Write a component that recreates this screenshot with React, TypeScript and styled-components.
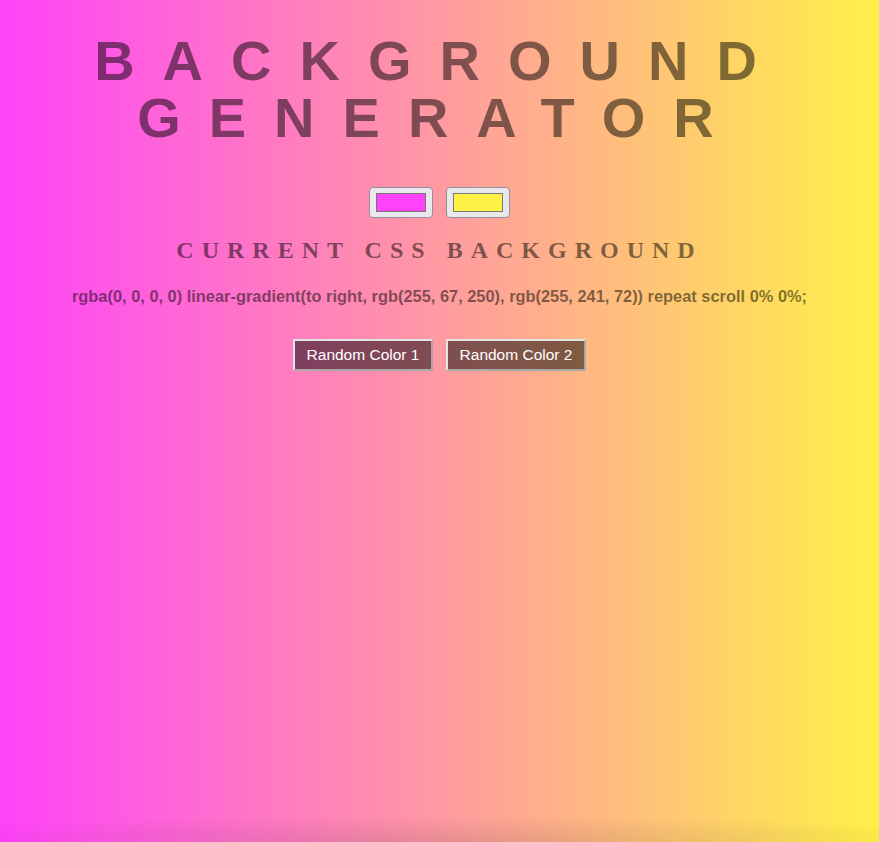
import React, { useState } from 'react';
import styled, { createGlobalStyle } from 'styled-components';

const GlobalStyle = createGlobalStyle`
    html, body {
        margin: 0;
        padding: 0;
    }
    #root {
        min-height: 100vh;
    }
`;

const Page = styled.div<{ $from: string; $to: string }>`
    min-height: 100vh;
    display: flex;
    flex-direction: column;
    align-items: center;
    text-align: center;
    color: rgba(0, 0, 0, 0.5);
    background: linear-gradient(to right, ${p => p.$from}, ${p => p.$to});
    font-family: "Liberation Sans", Arial, sans-serif;

    &::after {
        content: '';
        position: fixed;
        left: 0;
        right: 0;
        bottom: 0;
        height: 26px;
        pointer-events: none;
        background: radial-gradient(ellipse 70% 100% at 50% 100%, rgba(60, 40, 60, 0.13), rgba(0, 0, 0, 0) 100%);
    }
`;

const Title = styled.h1`
    margin: 32px 0 0;
    font-size: 56px;
    font-weight: 700;
    line-height: 57px;
    letter-spacing: 28px;
    text-transform: uppercase;
`;

const Pickers = styled.div`
    display: flex;
    gap: 13px;
    margin-top: 41px;
`;

const ColorInput = styled.input`
    -webkit-appearance: none;
    appearance: none;
    width: 64px;
    height: 31px;
    margin: 0;
    padding: 5px 6px;
    box-sizing: border-box;
    background: #e9e9ed;
    border: 1px solid #8f8f9d;
    border-radius: 4px;
    cursor: pointer;

    &::-webkit-color-swatch-wrapper {
        padding: 0;
    }
    &::-webkit-color-swatch {
        border: 1px solid #777;
        border-radius: 0;
    }
`;

const Heading = styled.h2`
    margin: 18px 0 0;
    font-family: "Liberation Serif", "Times New Roman", serif;
    font-size: 24px;
    font-weight: 700;
    line-height: 28px;
    letter-spacing: 8px;
    text-transform: uppercase;
`;

const CssText = styled.h3`
    margin: 22px 0 0;
    font-size: 16.4px;
    font-weight: 700;
    line-height: 20px;
`;

const Buttons = styled.div`
    display: flex;
    gap: 13px;
    margin-top: 33px;
`;

const Button = styled.button`
    width: 140px;
    height: 32px;
    padding: 0;
    font-family: "Liberation Sans", Arial, sans-serif;
    font-size: 15.5px;
    color: #fff;
    background: rgba(0, 0, 0, 0.5);
    border: 2px solid;
    border-color: #e4e4e4 #a8a8a8 #a8a8a8 #e4e4e4;
    cursor: pointer;
`;

const hex = (h: string) => {
    const n = parseInt(h.slice(1), 16);
    return `rgb(${(n >> 16) & 255}, ${(n >> 8) & 255}, ${n & 255})`;
};

const randomHex = () =>
    '#' + Math.floor(Math.random() * 0xffffff).toString(16).padStart(6, '0');

export default function App() {
    const [color1, setColor1] = useState('#ff43fa');
    const [color2, setColor2] = useState('#fff148');

    const css = `rgba(0, 0, 0, 0) linear-gradient(to right, ${hex(color1)}, ${hex(color2)}) repeat scroll 0% 0%;`;

    return (
        <Page $from={color1} $to={color2}>
            <GlobalStyle />
            <Title>
                Background
                <br />
                Generator
            </Title>
            <Pickers>
                <ColorInput type="color" value={color1} onChange={e => setColor1(e.target.value)} />
                <ColorInput type="color" value={color2} onChange={e => setColor2(e.target.value)} />
            </Pickers>
            <Heading>Current CSS Background</Heading>
            <CssText>{css}</CssText>
            <Buttons>
                <Button onClick={() => setColor1(randomHex())}>Random Color 1</Button>
                <Button onClick={() => setColor2(randomHex())}>Random Color 2</Button>
            </Buttons>
        </Page>
    );
}
